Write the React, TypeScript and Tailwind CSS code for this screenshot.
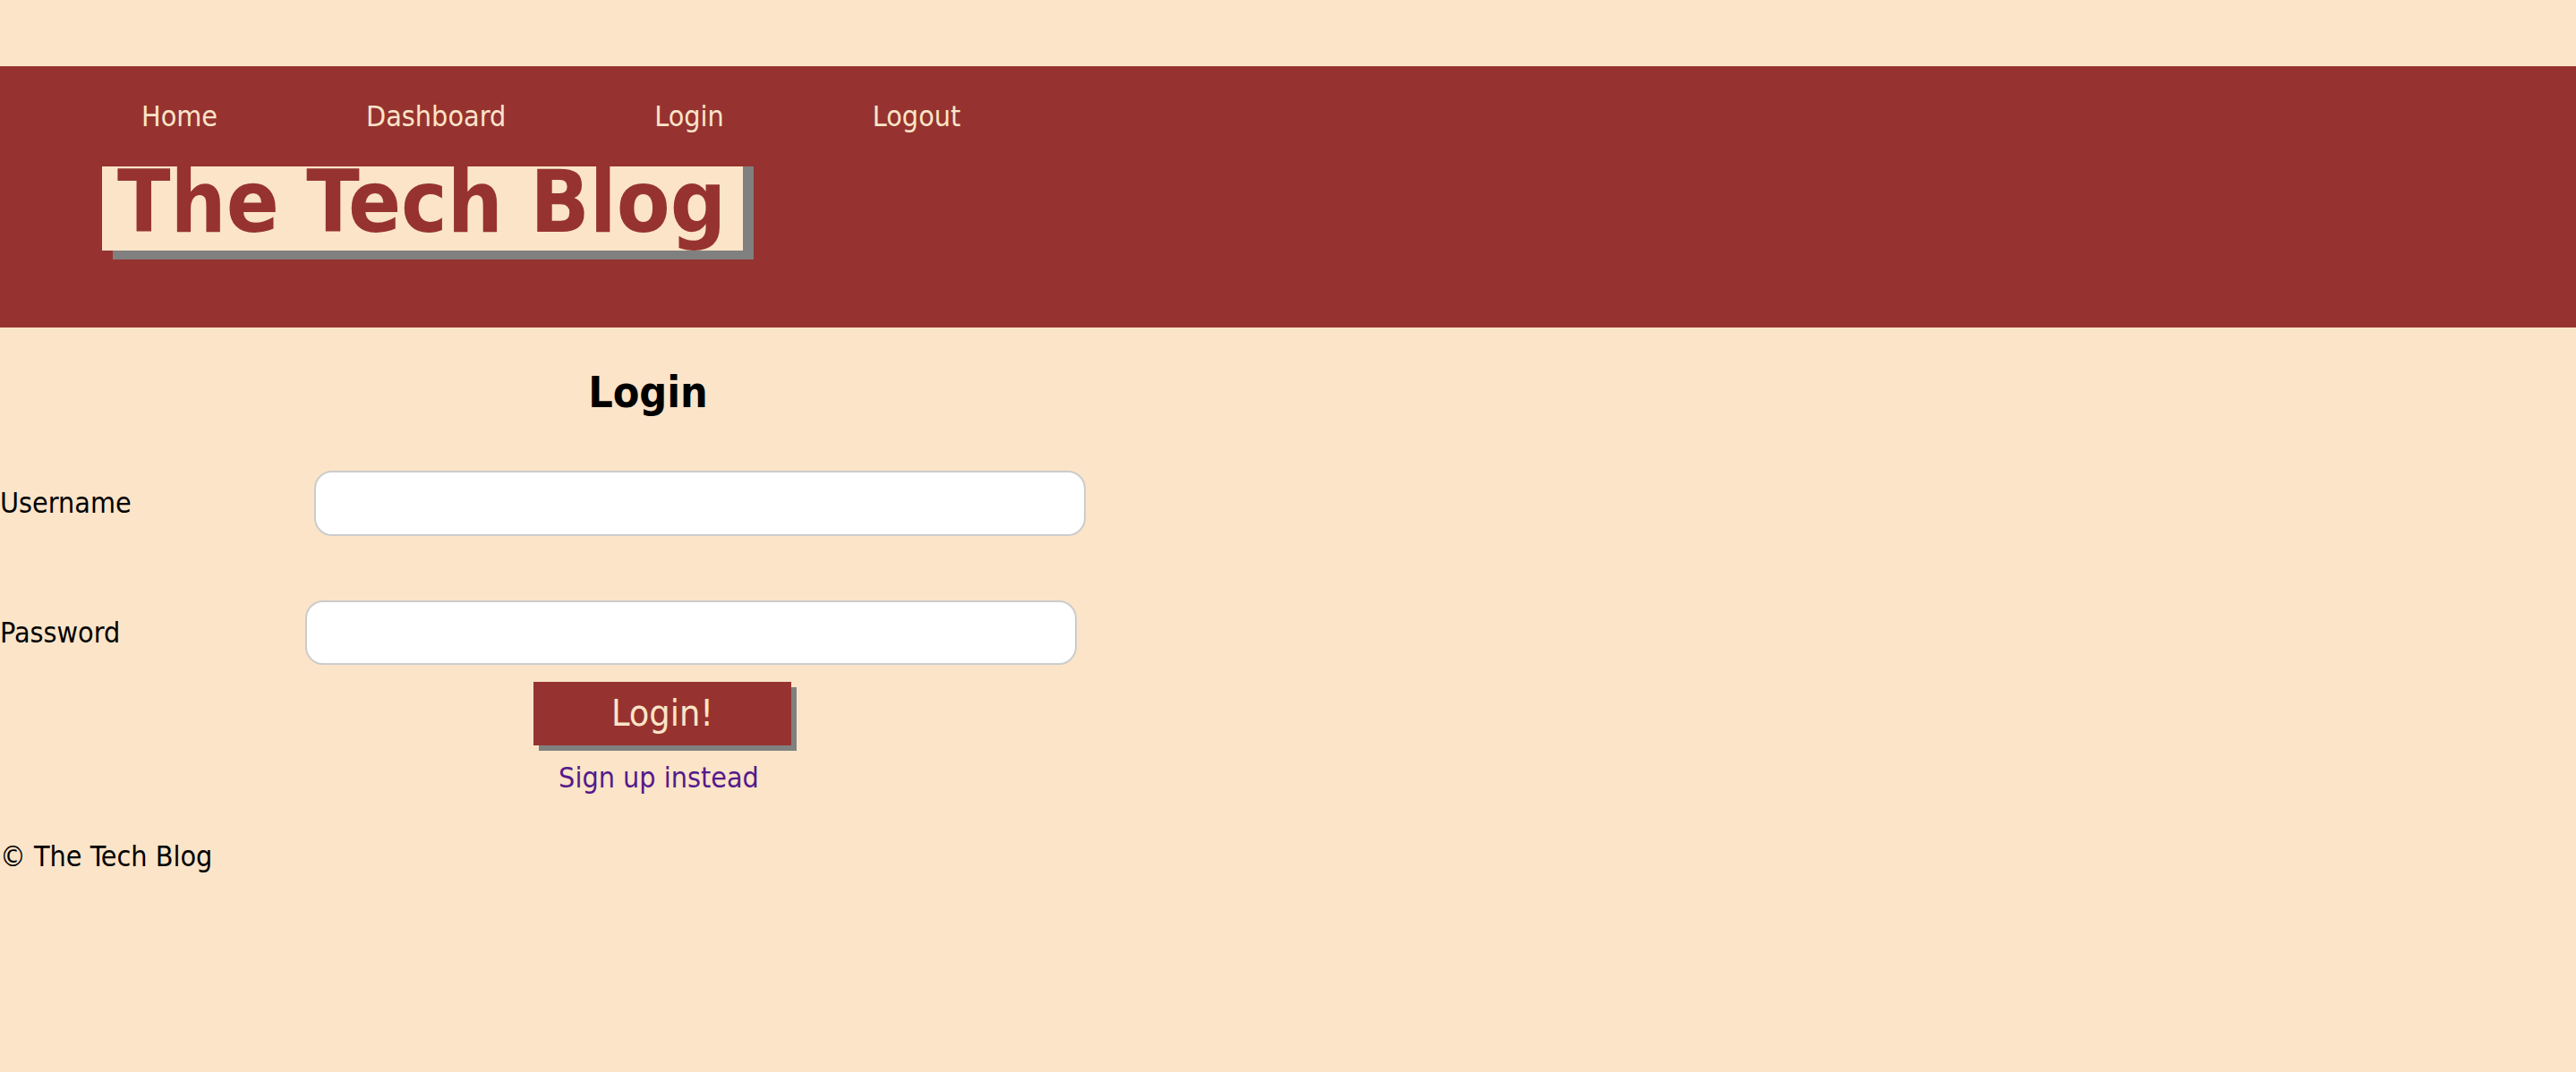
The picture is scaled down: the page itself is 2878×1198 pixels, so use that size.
const links = ["Home", "Dashboard", "Login", "Logout"];

export default function App() {
  return (
    <div className="min-h-screen w-full bg-[#fbe4c8] pt-[74px] font-['DejaVu_Sans_Condensed','DejaVu_Sans',sans-serif] text-[32px] leading-[37px] text-black">
      {/* Header */}
      <header className="h-[292px] w-full bg-[#963330] pt-[38px]">
        <nav className="flex gap-[166px] pl-[158px] text-[#fbe4c8]">
          {links.map((l) => (
            <a key={l} href="#">
              {l}
            </a>
          ))}
        </nav>
        <div className="ml-[114px] mt-[37px] h-[94px] w-[716px] bg-[#fbe4c8] pl-[17px] text-[97px] font-bold leading-[80px] text-[#963330] shadow-[12px_10px_0_#808080,12px_0_0_#808080]">
          The Tech Blog
        </div>
      </header>

      {/* Login form */}
      <main>
        <h2 className="mt-[44px] w-[1448px] text-center text-[48px] font-bold leading-[56px]">Login</h2>
        <form className="mt-[60px] flex flex-col gap-[72px]" onSubmit={(e) => e.preventDefault()}>
          <div className="flex h-[73px] items-center">
            <label htmlFor="username">Username</label>
            <input
              id="username"
              type="text"
              className="ml-[204px] h-[73px] w-[862px] rounded-[20px] border-2 border-[#cccccc] bg-white px-4 outline-none"
            />
          </div>
          <div className="flex h-[72px] items-center">
            <label htmlFor="password">Password</label>
            <input
              id="password"
              type="password"
              className="ml-[207px] h-[72px] w-[862px] rounded-[20px] border-2 border-[#cccccc] bg-white px-4 outline-none"
            />
          </div>
        </form>
        <div className="mt-[19px] flex w-[1480px] justify-center">
          <button className="h-[71px] w-[288px] bg-[#963330] text-[41px] leading-[71px] text-[#fbe4c8] shadow-[6px_6px_0_#808080]">
            Login!
          </button>
        </div>
        <div className="mt-[18px] w-[1472px] text-center">
          <a href="#" className="text-[#551a8b]">
            Sign up instead
          </a>
        </div>
      </main>

      <footer className="mt-[51px]">© The Tech Blog</footer>
    </div>
  );
}
